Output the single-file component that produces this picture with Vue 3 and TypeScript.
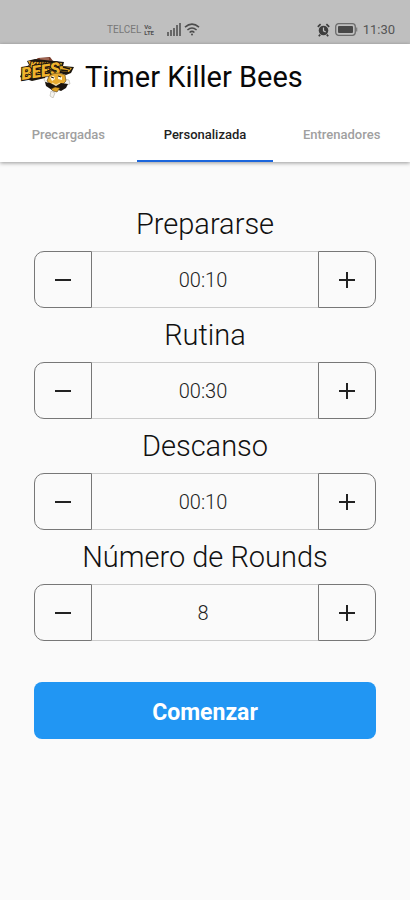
<script setup lang="ts">
import { ref } from 'vue'

interface Field {
  id: string
  label: string
  value: number
  step: number
  min: number
  time: boolean
}

const tabs = ['Precargadas', 'Personalizada', 'Entrenadores']
const active = ref('Personalizada')

const fields = ref<Field[]>([
  { id: 'prepare', label: 'Prepararse', value: 10, step: 5, min: 0, time: true },
  { id: 'work', label: 'Rutina', value: 30, step: 5, min: 5, time: true },
  { id: 'rest', label: 'Descanso', value: 10, step: 5, min: 0, time: true },
  { id: 'rounds', label: 'Número de Rounds', value: 8, step: 1, min: 1, time: false },
])

const two = (n: number): string => String(n).padStart(2, '0')

function show(f: Field): string {
  return f.time ? `${two(Math.floor(f.value / 60))}:${two(f.value % 60)}` : String(f.value)
}

function change(f: Field, direction: number): void {
  f.value = Math.max(f.min, f.value + direction * f.step)
}
</script>

<template>
  <div class="screen">
    <div class="status">
      <div class="status-group">
        <span class="carrier">TELCEL</span>
        <span class="volte"><span>Vo</span><span>LTE</span></span>
        <svg class="signal" width="14" height="13" viewBox="0 0 14 13">
          <path d="M0 9h2v4H0zM3 7h2v6H3zM6 5h2v8H6zM9 2h2v11H9zM12 0h2v13h-2z" fill="#686868" />
        </svg>
        <svg width="16" height="13" viewBox="0 0 16 13" fill="none" stroke="#4c4c4c" stroke-width="1.6">
          <path d="M1 4.2Q8-1.8 15 4.2M3.4 7Q8 3 12.6 7M5.6 9.5Q8 7.4 10.4 9.5" />
          <circle cx="8" cy="11.5" r="1" fill="#4c4c4c" stroke="none" />
        </svg>
      </div>
      <div class="status-group wide">
        <svg width="13" height="14" viewBox="0 0 13 14" fill="none">
          <circle cx="6.5" cy="7.5" r="4.8" fill="#3e3e3e" />
          <path d="M.8 3.8 3.6 1.2M12.2 3.8 9.4 1.2M3.2 11.6l-1.4 1.7M9.8 11.6l1.4 1.7" stroke="#3e3e3e" stroke-width="1.7" />
          <path d="M6.5 4.5v3.3l2.2 1.3" stroke="#c0c0c0" stroke-width="1.2" />
        </svg>
        <svg width="23" height="13" viewBox="0 0 23 13">
          <rect x=".7" y=".7" width="19.6" height="11.6" rx="3" fill="none" stroke="#6c6c6c" stroke-width="1.3" />
          <rect x="3" y="3" width="15" height="7" rx="1" fill="#484848" />
          <path d="M21.5 4.5v4" stroke="#808080" stroke-width="1.6" />
        </svg>
        <span class="clock">11:30</span>
      </div>
    </div>

    <header class="header">
      <div class="brand">
        <svg class="logo" width="54" height="43" viewBox="0 0 54 43" role="img" aria-label="Killer Bees">
          <path d="M15 5 18 3 30 2l3 4z" fill="#7a3b2a" />
          <path d="M20 4h9" stroke="#d9a18c" stroke-width=".8" />
          <path d="M7 6 15 4 44 7 43 11 54 12 51 18 46 20 40 18 31 20 25 23 12 26 0 22 4 13 9 10z" fill="#1b160f" />
          <path d="M8 6 42 8 41 11 52 13 49 17 40 16 29 17 12 23 2 21 5 14 10 10z" fill="#e5a624" />
          <path d="m43 12 7 2M41 15l7 1" stroke="#1b160f" stroke-width="1.4" />
          <text class="logo-top" x="10" y="13" transform="rotate(3 10 13)">KILLER</text>
          <text class="logo-bottom" x="2" y="25" transform="rotate(-9 2 25)">BEES</text>
          <path d="m8 19 3 1M18 17l3 1M27 15l3 1M37 12l3 1" stroke="#1b160f" stroke-width="1" />
          <path d="M24 25q1-4 5-3l1 4-3 3zM44 24l5 1 1 4-5 1zM31 36l4 2-2 5-3-2z" fill="#f4f3ef" stroke="#b3afa5" stroke-width=".6" />
          <path d="M29 21q3-3 10-3l6 2 1 6-4 4-10 0-5-4z" fill="#e8ac30" stroke="#6d521e" stroke-width=".7" />
          <path d="m30 22 4-1 1 3-3 2zM38 21l4 1v3l-4-1z" fill="#fff8df" />
          <path d="m31 22 3 1m4-2 3 1" stroke="#231d16" stroke-width="1" />
          <path d="m25 27 5 1 6 3 5-3 7 1-2 4-5 3-5-2-4 1-6-4z" fill="#19130d" />
          <path d="m31 34 4-2 5 1-3 4-4-1z" fill="#dda022" stroke="#302512" stroke-width=".5" />
          <path d="m32 28 4 2 4-2" fill="none" stroke="#f6e8bd" stroke-width="1" />
        </svg>
        <h1>Timer Killer Bees</h1>
      </div>
      <nav class="tabs">
        <button
          v-for="tab in tabs"
          :key="tab"
          type="button"
          class="tab"
          :class="{ active: tab === active }"
          :aria-pressed="tab === active"
          @click="active = tab"
        >{{ tab }}</button>
      </nav>
    </header>

    <form class="form" @submit.prevent>
      <div v-for="f in fields" :key="f.id" class="field">
        <label :for="f.id">{{ f.label }}</label>
        <div class="stepper">
          <button type="button" class="step minus" :aria-label="`Menos ${f.label}`" @click="change(f, -1)">
            <svg width="18" height="18" viewBox="0 0 18 18"><path d="M1 9h16" /></svg>
          </button>
          <input :id="f.id" class="value" type="text" readonly :value="show(f)" />
          <button type="button" class="step plus" :aria-label="`Más ${f.label}`" @click="change(f, 1)">
            <svg width="18" height="18" viewBox="0 0 18 18"><path d="M1 9h16M9 1v16" /></svg>
          </button>
        </div>
      </div>
      <button type="submit" class="start">Comenzar</button>
    </form>
  </div>
</template>

<style>
body {
  margin: 0;
  background: #fafafa;
}
</style>

<style scoped>
.screen {
  min-height: 100vh;
  background: #fafafa;
  color: #111;
  font-family: Roboto, sans-serif;
}
button,
input {
  margin: 0;
  font-family: inherit;
}
.status {
  box-sizing: border-box;
  height: 44px;
  padding: 15px 15px 0 107px;
  display: flex;
  justify-content: space-between;
  align-items: center;
  background: #bfbfbf;
}
.status-group {
  display: flex;
  align-items: center;
  gap: 3px;
}
.status-group.wide {
  gap: 5px;
}
.carrier {
  color: #777;
  font-size: 10px;
}
.volte {
  display: flex;
  flex-direction: column;
  color: #505050;
  font-size: 6px;
  font-weight: 700;
  line-height: 6px;
}
.signal {
  margin-left: 10px;
}
.clock {
  color: #555;
  font-size: 13px;
}
.header {
  position: relative;
  background: #fff;
  box-shadow: 0 1px 4px rgba(0, 0, 0, 0.4);
}
.brand {
  display: flex;
  align-items: center;
  gap: 11px;
  height: 65px;
  padding: 0 20px;
}
h1 {
  margin: 0;
  color: #080808;
  font-size: 29px;
  font-weight: 400;
  line-height: 32px;
}
.logo-top,
.logo-bottom {
  fill: #f0b42c;
  stroke: #1b160f;
  stroke-width: 2px;
  paint-order: stroke;
  font-family: Roboto, sans-serif;
  font-style: italic;
  font-weight: 900;
}
.logo-top {
  font-size: 9px;
}
.logo-bottom {
  font-size: 17px;
}
.tabs {
  display: grid;
  grid-template-columns: repeat(3, 1fr);
}
.tab {
  height: 53px;
  padding: 0;
  border: 0;
  border-bottom: 2px solid transparent;
  background: none;
  color: #a0a0a0;
  font-size: 13px;
  font-weight: 500;
}
.tab.active {
  border-color: #1c66dc;
  color: #222;
}
.form {
  display: flex;
  flex-direction: column;
  padding: 35px 34px 40px;
}
.field {
  display: flex;
  flex-direction: column;
}
.field label {
  height: 54px;
  font-size: 29px;
  font-weight: 300;
  line-height: 54px;
  text-align: center;
}
.stepper {
  display: flex;
  height: 57px;
}
.step {
  box-sizing: border-box;
  display: flex;
  align-items: center;
  justify-content: center;
  width: 58px;
  padding: 0;
  border: 1px solid #777;
  background: #fafafa;
}
.step path {
  fill: none;
  stroke: #222;
  stroke-width: 2;
}
.minus {
  border-radius: 10px 0 0 10px;
}
.plus {
  border-radius: 0 10px 10px 0;
}
.value {
  box-sizing: border-box;
  flex: 1;
  min-width: 0;
  padding: 0 4px 0 0;
  border: solid #ccc;
  border-width: 1px 0;
  border-radius: 0;
  outline: 0;
  background: #fafafa;
  color: #222;
  font-size: 20px;
  font-weight: 300;
  text-align: center;
}
.start {
  height: 57px;
  margin-top: 41px;
  padding: 4px 0 0;
  border: 0;
  border-radius: 8px;
  background: #2196f3;
  color: #fff;
  font-size: 23px;
  font-weight: 700;
}
</style>
